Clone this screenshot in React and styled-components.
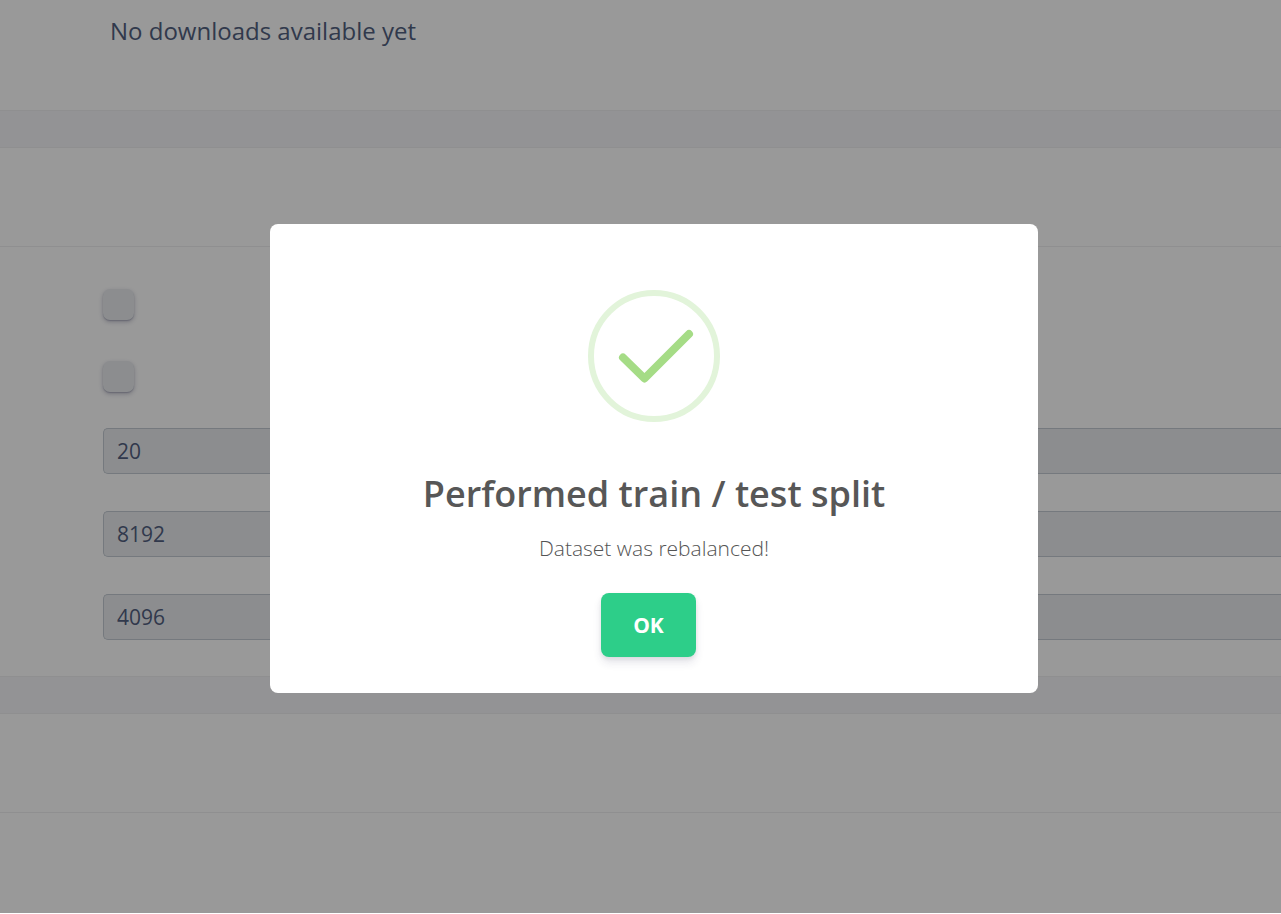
import React from "react";
import styled, { createGlobalStyle } from "styled-components";

const GlobalStyle = createGlobalStyle`
  *, *::before, *::after { box-sizing: border-box; }
  body {
    margin: 0;
    background: #f6f6f9;
    color: #525f7f;
    font-family: "Open Sans", sans-serif;
  }
`;

const Page = styled.main`
  display: flex;
  flex-direction: column;
  gap: 36px;
  min-height: 100vh;
`;

const Card = styled.section`
  background: #fff;
  border: solid #eeeef0;
  border-width: ${(p) => (p.$first ? "0 0 1px" : p.$last ? "1px 0 0" : "1px 0")};
  flex: ${(p) => (p.$last ? "1" : "none")};
`;

const CardHeader = styled.header`
  height: ${(p) => (p.$tall ? 101 : 99)}px;
  border-bottom: 1px solid #eeeef0;
`;

const EmptyNote = styled.p`
  margin: 0;
  padding: 13px 110px 61px;
  font-size: 24px;
  line-height: 36px;
`;

const Form = styled.form`
  display: flex;
  flex-direction: column;
  gap: 36px;
  padding: 42px 0 36px 103px;
`;

const Toggles = styled.div`
  display: flex;
  flex-direction: column;
  align-items: flex-start;
  gap: 41px;
`;

const Checkbox = styled.input`
  appearance: none;
  width: 31px;
  height: 31px;
  margin: 0;
  border-radius: 7px;
  background: #e9ecef;
  box-shadow: 0 2px 4px rgba(50, 50, 93, 0.3), 0 1px 1px rgba(50, 50, 93, 0.2);
`;

const Fields = styled.div`
  display: flex;
  flex-direction: column;
  gap: 37px;
`;

const Field = styled.input`
  display: block;
  width: 100%;
  height: 46px;
  padding: 0 13px;
  border: 1px solid #c4cad2;
  border-right: 0;
  border-radius: 5px 0 0 5px;
  background: #e9ecef;
  color: #525f7f;
  font: 400 21px/30px "Open Sans", sans-serif;
  outline: none;
`;

const Overlay = styled.div`
  position: fixed;
  inset: 0 0 1px;
  display: flex;
  align-items: center;
  justify-content: center;
  padding: 3px 0 0 27px;
  background: rgba(0, 0, 0, 0.4);
`;

const Dialog = styled.div`
  display: flex;
  flex-direction: column;
  align-items: center;
  width: 60%;
  min-width: 768px;
  padding: 66px 27px 36px;
  border-radius: 8px;
  background: #fff;
  text-align: center;
`;

const SuccessIcon = styled.svg`
  width: 132px;
  height: 132px;
`;

const Title = styled.h2`
  margin: 40px 0 0;
  color: #575757;
  font-size: 36px;
  font-weight: 600;
  line-height: 64px;
`;

const Message = styled.p`
  margin: 7px 0 0;
  color: #545454;
  font-size: 21px;
  font-weight: 300;
  line-height: 30px;
`;

const Actions = styled.div`
  padding: 30px 11px 0 0;
`;

const ConfirmButton = styled.button`
  height: 64px;
  padding: 0 32px;
  border: 0;
  border-radius: 8px;
  background: #2dce89;
  box-shadow: 0 6px 9px rgba(50, 50, 93, 0.11), 0 2px 4px rgba(0, 0, 0, 0.08);
  color: #fff;
  font: 700 21px/32px "Open Sans", sans-serif;
`;

const fields = [
  { label: "Number of training cycles", value: "20" },
  { label: "Training window", value: "8192" },
  { label: "Test window", value: "4096" },
];

export default function App() {
  return (
    <>
      <GlobalStyle />
      <Page>
        <Card $first>
          <EmptyNote>No downloads available yet</EmptyNote>
        </Card>
        <Card>
          <CardHeader />
          <Form>
            <Toggles>
              <Checkbox type="checkbox" aria-label="First option" />
              <Checkbox type="checkbox" aria-label="Second option" />
            </Toggles>
            <Fields>
              {fields.map((f) => (
                <Field key={f.value} type="text" aria-label={f.label} defaultValue={f.value} />
              ))}
            </Fields>
          </Form>
        </Card>
        <Card $last>
          <CardHeader />
        </Card>
      </Page>
      <Overlay>
        <Dialog role="dialog" aria-modal="true" aria-labelledby="dialog-title">
          <SuccessIcon viewBox="0 0 132 132" fill="none" aria-hidden="true">
            <circle cx="66" cy="66" r="63" stroke="#e2f4da" strokeWidth="6" />
            <path
              d="M35 67.5 L56.5 88.5 L101 44"
              stroke="#a5dc86"
              strokeWidth="8"
              strokeLinecap="round"
              strokeLinejoin="round"
            />
          </SuccessIcon>
          <Title id="dialog-title">Performed train / test split</Title>
          <Message>Dataset was rebalanced!</Message>
          <Actions>
            <ConfirmButton type="button">OK</ConfirmButton>
          </Actions>
        </Dialog>
      </Overlay>
    </>
  );
}
